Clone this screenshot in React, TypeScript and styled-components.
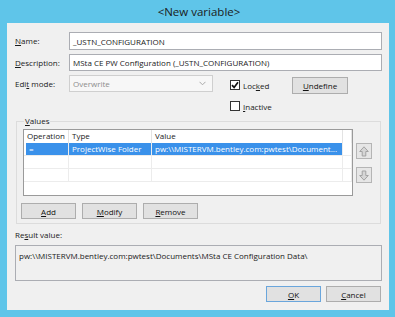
import React from 'react';
import styled, { createGlobalStyle } from 'styled-components';

const FONT = `'Open Sans', 'Noto Sans', sans-serif`;

const Global = createGlobalStyle`
  html, body { margin: 0; padding: 0; background: #5fc5e9; }
  body { width: 395px; height: 317px; overflow: hidden; }
  #root { width: 395px; height: 317px; }
`;

const Window = styled.div`
  width: 395px;
  height: 317px;
  box-sizing: border-box;
  background: #5fc5e9;
  display: flex;
  flex-direction: column;
  padding: 0 6px 7px 7px;
  font-family: ${FONT};
  font-size: 8px;
  color: #1a1a1a;
`;

const TitleBar = styled.div`
  height: 23px;
  display: flex;
  align-items: center;
  justify-content: center;
  font-size: 11.5px;
  color: #1b1b1b;
  padding-left: 2px;
`;

const Client = styled.div`
  flex: 1;
  background: #f0f0f0;
  display: flex;
  flex-direction: column;
  padding: 9px 7px 0 8px;
`;

const FieldRow = styled.div<{ $h: number; $mt: number }>`
  display: flex;
  align-items: center;
  height: ${(p) => p.$h}px;
  margin-top: ${(p) => p.$mt}px;
`;

const Label = styled.div`
  width: 54px;
  flex: none;
  line-height: 12px;
  white-space: nowrap;
`;

const TextBox = styled.div<{ $h: number }>`
  flex: 1;
  height: ${(p) => p.$h}px;
  box-sizing: border-box;
  border: 1px solid #abadb3;
  background: #fff;
  padding-left: 3px;
  display: flex;
  align-items: center;
  white-space: nowrap;
  overflow: hidden;
`;

const EditBlock = styled.div`
  display: flex;
  align-items: flex-start;
  margin-top: 4px;
  height: 37px;
`;

const EditLabel = styled(Label)`
  line-height: 17px;
`;

const Combo = styled.div`
  width: 144px;
  height: 17px;
  box-sizing: border-box;
  border: 1px solid #cfcfcf;
  background: #f7f7f7;
  color: #8d8d8d;
  padding-left: 3px;
  display: flex;
  align-items: center;
  justify-content: space-between;
`;

const ComboArrow = styled.svg`
  width: 7px;
  height: 5px;
  margin-right: 6px;
`;

const CheckCol = styled.div`
  width: 62px;
  margin-left: 17px;
  display: flex;
  flex-direction: column;
  gap: 11px;
  padding-top: 5px;
`;

const CheckRow = styled.div`
  display: flex;
  align-items: center;
  gap: 3px;
  height: 10px;
  white-space: nowrap;
`;

const CheckBox = styled.div`
  width: 10px;
  height: 10px;
  box-sizing: border-box;
  border: 1px solid #333;
  background: #fff;
  display: flex;
  align-items: center;
  justify-content: center;
`;

const Button = styled.div<{ $w?: number; $default?: boolean }>`
  width: ${(p) => p.$w ?? 55}px;
  height: 16px;
  box-sizing: border-box;
  border: 1px solid ${(p) => (p.$default ? '#6aa6dc' : '#adadad')};
  background: #e1e1e1;
  display: flex;
  align-items: center;
  justify-content: center;
  color: #111;
  flex: none;
`;

const UndefineButton = styled(Button)`
  height: 17px;
  margin-top: 2px;
`;

const GroupBox = styled.fieldset`
  margin: 3px 1px 0 1px;
  padding: 2px 8px 4px 4px;
  border: 1px solid #dcdcdc;
  min-width: 0;
`;

const Legend = styled.legend`
  padding: 0 1px;
  margin-left: 3px;
  line-height: 12px;
  font-size: 8px;
`;

const ListRow = styled.div`
  display: flex;
  gap: 3px;
  margin-left: 2px;
`;

const List = styled.div`
  width: 330px;
  height: 67px;
  box-sizing: border-box;
  border: 1px solid #9a9a9a;
  background: #fff;
  overflow: hidden;
`;

const Grid = styled.div<{ $h: number; $head?: boolean }>`
  display: grid;
  grid-template-columns: 45px 83px 191px 1fr;
  height: ${(p) => p.$h}px;
  box-sizing: border-box;
  border-bottom: ${(p) => (p.$head ? 'none' : '1px solid #ececec')};
`;

const Cell = styled.div<{ $sel?: boolean; $head?: boolean; $first?: boolean }>`
  display: block;
  line-height: 12px;
  padding-left: 3px;
  white-space: nowrap;
  overflow: hidden;
  border-right: 1px solid ${(p) => (p.$head ? '#e3e3e3' : '#ececec')};
  background: ${(p) => (p.$sel ? '#3a91ea' : 'transparent')};
  color: ${(p) => (p.$sel ? '#fff' : '#1a1a1a')};
  margin-left: ${(p) => (p.$first && p.$sel ? '2px' : '0')};
`;

const ArrowCol = styled.div`
  display: flex;
  flex-direction: column;
  gap: 8px;
  margin-top: 14px;
`;

const ArrowButton = styled.div`
  width: 16px;
  height: 16px;
  box-sizing: border-box;
  border: 1px solid #b5b5b5;
  background: #e6e6e6;
  display: flex;
  align-items: center;
  justify-content: center;
`;

const ButtonRow = styled.div`
  display: flex;
  gap: 6px;
  margin-top: 7px;
`;

const ResultLabel = styled.div`
  margin-top: 5px;
  line-height: 12px;
`;

const ResultBox = styled.div`
  margin-top: 4px;
  height: 36px;
  box-sizing: border-box;
  border: 1px solid #abadb3;
  background: #f0f0f0;
  padding: 4px 3px;
  line-height: 12px;
  white-space: nowrap;
  overflow: hidden;
`;

const Footer = styled.div`
  display: flex;
  justify-content: flex-end;
  gap: 5px;
  margin-top: 5px;
  margin-right: 1px;
`;

const Arrow = ({ down }: { down?: boolean }) => (
  <svg width="10" height="11" viewBox="0 0 10 11" style={{ transform: down ? 'rotate(180deg)' : undefined }}>
    <polygon points="5,0.8 9.3,5.5 6.8,5.5 6.8,10 3.2,10 3.2,5.5 0.7,5.5" fill="#d6d6d6" stroke="#a3a3a3" strokeWidth="1" />
  </svg>
);

const Check = () => (
  <svg width="8" height="8" viewBox="0 0 8 8">
    <path d="M1 4.2 L3.1 6.4 L7 1.2" fill="none" stroke="#111" strokeWidth="1.7" />
  </svg>
);

const rows = [
  { op: '=', type: 'ProjectWise Folder', value: 'pw:\\\\MISTERVM.bentley.com:pwtest\\Document...', sel: true },
  { op: '', type: '', value: '', sel: false },
  { op: '', type: '', value: '', sel: false },
];

export default function App() {
  return (
    <>
      <Global />
      <Window>
        <TitleBar>&lt;New variable&gt;</TitleBar>
        <Client>
          <FieldRow $h={18} $mt={0}>
            <Label><u>N</u>ame:</Label>
            <TextBox $h={18}>_USTN_CONFIGURATION</TextBox>
          </FieldRow>
          <FieldRow $h={17} $mt={4}>
            <Label><u>D</u>escription:</Label>
            <TextBox $h={17}>MSta CE PW Configuration (_USTN_CONFIGURATION)</TextBox>
          </FieldRow>
          <EditBlock>
            <EditLabel>Edi<u>t</u> mode:</EditLabel>
            <Combo>
              Overwrite
              <ComboArrow viewBox="0 0 7 5">
                <path d="M0.5 0.8 L3.5 3.8 L6.5 0.8" fill="none" stroke="#a9a9a9" strokeWidth="1" />
              </ComboArrow>
            </Combo>
            <CheckCol>
              <CheckRow>
                <CheckBox><Check /></CheckBox>
                <span>Loc<u>k</u>ed</span>
              </CheckRow>
              <CheckRow>
                <CheckBox />
                <span><u>I</u>nactive</span>
              </CheckRow>
            </CheckCol>
            <UndefineButton $w={56}><span><u>U</u>ndefine</span></UndefineButton>
          </EditBlock>
          <GroupBox>
            <Legend><u>V</u>alues</Legend>
            <ListRow>
              <List>
                <Grid $h={13} $head>
                  <Cell $head>Operation</Cell>
                  <Cell $head>Type</Cell>
                  <Cell $head>Value</Cell>
                  <Cell $head />
                </Grid>
                {rows.map((r, i) => (
                  <Grid key={i} $h={13}>
                    <Cell $sel={r.sel} $first>{r.op}</Cell>
                    <Cell $sel={r.sel}>{r.type}</Cell>
                    <Cell $sel={r.sel}>{r.value}</Cell>
                    <Cell />
                  </Grid>
                ))}
              </List>
              <ArrowCol>
                <ArrowButton><Arrow /></ArrowButton>
                <ArrowButton><Arrow down /></ArrowButton>
              </ArrowCol>
            </ListRow>
            <ButtonRow>
              <Button><span><u>A</u>dd</span></Button>
              <Button><span><u>M</u>odify</span></Button>
              <Button><span><u>R</u>emove</span></Button>
            </ButtonRow>
          </GroupBox>
          <ResultLabel>Re<u>s</u>ult value:</ResultLabel>
          <ResultBox>pw:\\MISTERVM.bentley.com:pwtest\Documents\MSta CE Configuration Data\</ResultBox>
          <Footer>
            <Button $default><span><u>O</u>K</span></Button>
            <Button><span><u>C</u>ancel</span></Button>
          </Footer>
        </Client>
      </Window>
    </>
  );
}
